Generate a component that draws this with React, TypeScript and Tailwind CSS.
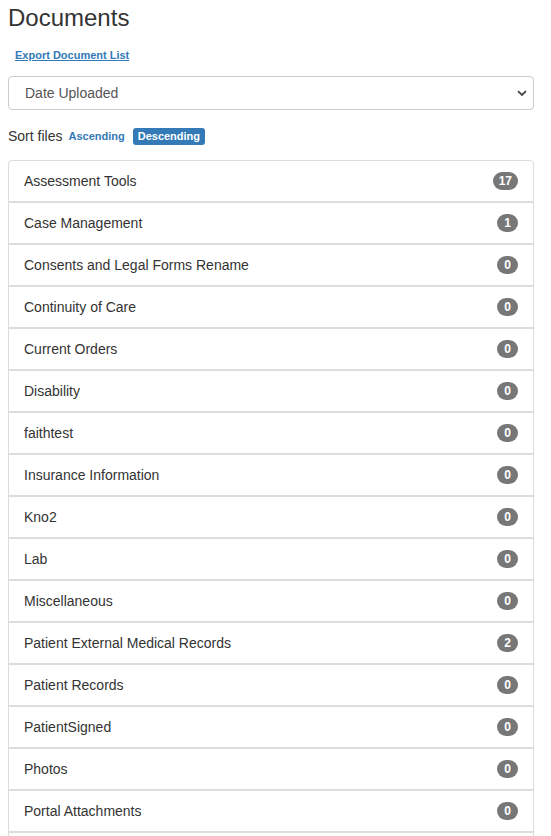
import React from "react";

const items: [string, number][] = [
  ["Assessment Tools", 17],
  ["Case Management", 1],
  ["Consents and Legal Forms Rename", 0],
  ["Continuity of Care", 0],
  ["Current Orders", 0],
  ["Disability", 0],
  ["faithtest", 0],
  ["Insurance Information", 0],
  ["Kno2", 0],
  ["Lab", 0],
  ["Miscellaneous", 0],
  ["Patient External Medical Records", 2],
  ["Patient Records", 0],
  ["PatientSigned", 0],
  ["Photos", 0],
  ["Portal Attachments", 0],
];

export default function App() {
  return (
    <div
      className="h-[836px] overflow-hidden bg-white pl-2 pr-[17px] text-[14px] leading-[20px] text-[#333]"
      style={{ fontFamily: '"Liberation Sans", Arial, sans-serif' }}
    >
      <h3 className="pt-[3px] text-[24px] leading-[29px] text-[#333]">Documents</h3>
      <div className="mt-[12px] pl-[7px]">
        <a className="text-[11px] font-bold leading-[16px] text-[#337ab7] underline">Export Document List</a>
      </div>
      <div className="relative mt-[12px] h-[34px] rounded-[4px] border border-[#ccc] bg-white">
        <div className="pl-[16px] pt-[6px] text-[14px] leading-[20px] text-[#555]">Date Uploaded</div>
        <svg className="absolute right-[6px] top-[13px]" width="10" height="7" viewBox="0 0 10 7">
          <path d="M1 1.2 L5 5 L9 1.2" fill="none" stroke="#444" strokeWidth="1.8" />
        </svg>
      </div>
      <div className="mt-[16px] flex items-center">
        <span className="text-[14px] text-[#333]">Sort files</span>
        <span className="ml-[6px] text-[11px] font-bold text-[#337ab7]">Ascending</span>
        <span className="ml-[8px] rounded-[3px] bg-[#337ab7] px-[5px] text-[11px] font-bold leading-[17px] text-white">
          Descending
        </span>
      </div>
      <div className="mt-[14px]">
        {items.map(([name, n], i) => (
          <div
            key={name}
            className={`flex h-[42px] items-center justify-between border border-[#ddd] px-[15px] ${
              i === 0 ? "rounded-t-[4px]" : ""
            }`}
          >
            <span className="text-[14px] text-[#333]">{name}</span>
            <span className="min-w-[21px] rounded-[10px] bg-[#777] px-[6px] text-center text-[12px] font-bold leading-[18px] text-white">
              {n}
            </span>
          </div>
        ))}
        <div className="h-[42px] border border-[#ddd]" />
      </div>
    </div>
  );
}
